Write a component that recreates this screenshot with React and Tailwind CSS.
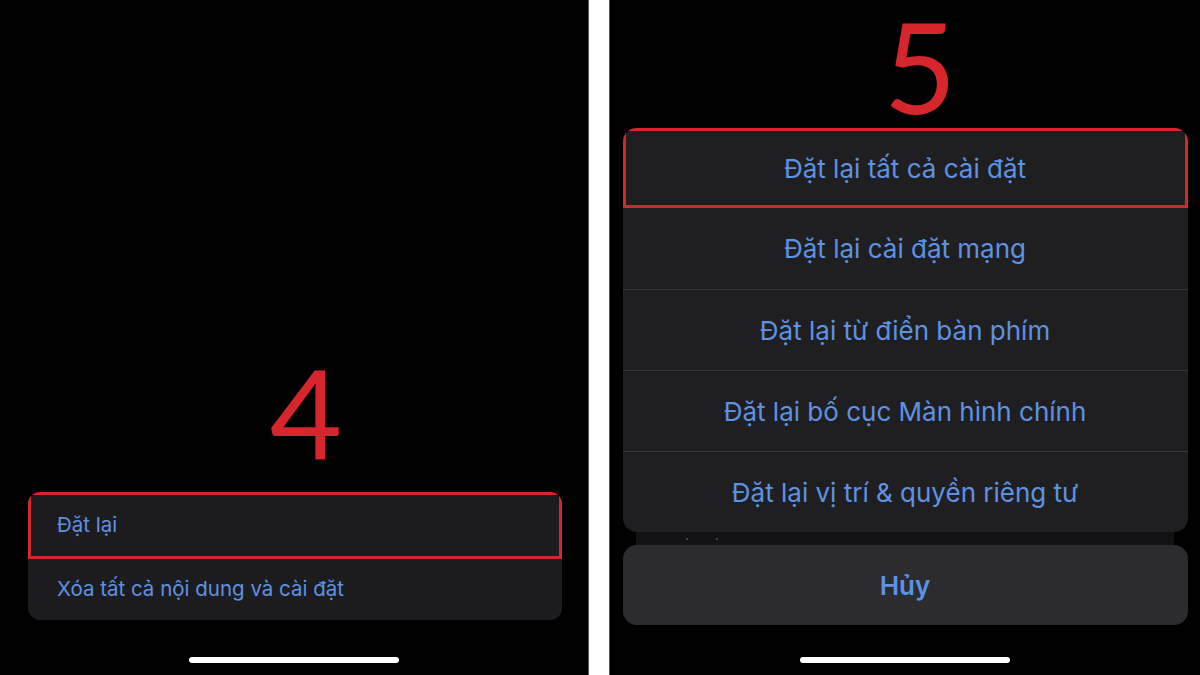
export default function App() {
  const font = { fontFamily: 'Inter, "Noto Sans", "Liberation Sans", sans-serif' };
  const numFont = { fontFamily: 'Lato, "Open Sans", sans-serif' };
  const rows = [
    "Đặt lại cài đặt mạng",
    "Đặt lại từ điển bàn phím",
    "Đặt lại bố cục Màn hình chính",
    "Đặt lại vị trí & quyền riêng tư",
  ];
  return (
    <div className="w-[1200px] h-[675px] flex bg-white overflow-hidden" style={font}>
      {/* Left panel */}
      <div className="w-[589px] h-full bg-black flex flex-col items-center border-r border-[#555]">
        <div className="flex-1" />
        <div className="text-[125px] leading-none text-[#d7262b] pl-[24px] mb-[18px]" style={numFont}>
          4
        </div>
        <div className="w-[534px] h-[128px] ml-[2px] rounded-[12px] bg-[#1c1c1e] flex flex-col overflow-hidden">
          <div className="h-[67px] border-[3px] border-[#d7262b] flex items-center pl-[26px] text-[20.5px] text-[#5e92e3]">
            Đặt lại
          </div>
          <div className="flex-1 flex items-center pl-[29px] text-[20.5px] text-[#5e92e3]">
            Xóa tất cả nội dung và cài đặt
          </div>
        </div>
        <div className="h-[37px]" />
        <div className="w-[210px] h-[6px] rounded-full bg-white" />
        <div className="h-[12px]" />
      </div>

      {/* Divider */}
      <div className="w-[20px] h-full bg-white" />

      {/* Right panel */}
      <div className="flex-1 h-full bg-black flex flex-col items-center border-l border-[#555]">
        <div className="pl-[30px] pt-[3px] mb-[-1px] text-[126px] leading-none text-[#d7262b]" style={numFont}>
          5
        </div>
        <div className="w-[565px] rounded-[14px] bg-[#1f1f21] flex flex-col overflow-hidden relative z-10">
          <div className="h-[80px] border-[3px] border-[#d7262b] flex items-center justify-center text-[26px] text-[#5e92e3]">
            Đặt lại tất cả cài đặt
          </div>
          {rows.map((r, i) => (
            <div
              key={r}
              className={`h-[81px] flex items-center justify-center text-[26px] text-[#5e92e3] ${i > 0 ? "border-t border-[#38383a]" : ""}`}
            >
              {r}
            </div>
          ))}
        </div>
        <div className="w-[538px] h-[13px] bg-[#121214] flex items-center gap-[28px] pl-[50px]">
          <div className="w-[2px] h-[2px] rounded-full bg-[#555]" />
          <div className="w-[2px] h-[2px] rounded-full bg-[#555]" />
        </div>
        <div className="w-[565px] h-[80px] rounded-[14px] bg-[#2c2c2e] flex items-center justify-center text-[26px] font-semibold text-[#5e92e3]">
          Hủy
        </div>
        <div className="flex-1" />
        <div className="w-[210px] h-[6px] rounded-full bg-white" />
        <div className="h-[12px]" />
      </div>
    </div>
  );
}
